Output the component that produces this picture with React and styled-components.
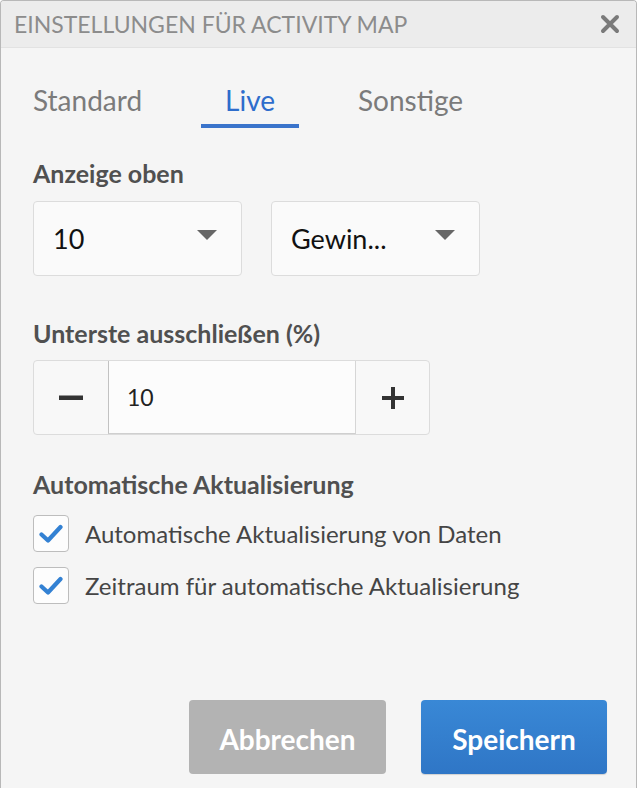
import styled, { createGlobalStyle } from "styled-components";

const GlobalStyle = createGlobalStyle`
  html, body {
    margin: 0;
    padding: 0;
    background: #ffffff;
  }
  body {
    font-family: Lato, "Noto Sans", sans-serif;
  }
`;

const Panel = styled.div`
  box-sizing: border-box;
  width: 637px;
  height: 788px;
  border: 1px solid #b8b8b8;
  border-bottom: none;
  border-radius: 4px 4px 0 0;
  background: #f5f5f5;
  display: flex;
  flex-direction: column;
  overflow: hidden;
`;

const Header = styled.div`
  height: 46px;
  flex-shrink: 0;
  background: #ececec;
  border-bottom: 1px solid #e2e2e2;
  display: flex;
  align-items: center;
  justify-content: space-between;
  padding: 0 14px 0 13px;
`;

const Title = styled.h2`
  margin: 0;
  font-size: 23px;
  font-weight: 400;
  color: #8c8c8c;
  text-transform: uppercase;
`;

const CloseButton = styled.button`
  border: none;
  background: none;
  padding: 0;
  width: 24px;
  height: 24px;
  display: flex;
  align-items: center;
  justify-content: center;
  cursor: pointer;
`;

const Body = styled.div`
  flex: 1;
  display: flex;
  flex-direction: column;
  padding: 0 32px;
`;

const Tabs = styled.div`
  display: flex;
  gap: 35px;
  margin: 37px 0 0 -24px;
`;

const Tab = styled.div`
  height: 43px;
  padding: 0 24px;
  box-sizing: border-box;
  font-size: 28px;
  line-height: 30px;
  color: ${({ $active }) => ($active ? "#2e6dcc" : "#7b7b7b")};
  border-bottom: 4px solid
    ${({ $active }) => ($active ? "#3a74cb" : "transparent")};
`;

const SectionLabel = styled.div`
  font-size: 25px;
  line-height: 30px;
  font-weight: 700;
  color: #505050;
  margin-top: ${({ $top }) => $top}px;
`;

const SelectRow = styled.div`
  display: flex;
  gap: 29px;
  margin-top: 13px;
`;

const Select = styled.div`
  box-sizing: border-box;
  width: 209px;
  height: 75px;
  border: 1px solid #dcdcdc;
  border-radius: 4px;
  background: #fafafa;
  display: flex;
  align-items: center;
  justify-content: space-between;
  padding: 0 24px 0 19px;
  font-size: 27px;
  color: #111;
`;

const Caret = styled.span`
  width: 0;
  height: 0;
  border-left: 10px solid transparent;
  border-right: 10px solid transparent;
  border-top: 10px solid #666;
  margin-bottom: 8px;
`;

const Stepper = styled.div`
  box-sizing: border-box;
  width: 397px;
  height: 75px;
  margin-top: 12px;
  display: flex;
  border: 1px solid #dcdcdc;
  border-radius: 4px;
  background: #f8f8f8;
  overflow: hidden;
`;

const StepButton = styled.button`
  width: ${({ $w }) => $w}px;
  border: none;
  background: transparent;
  display: flex;
  align-items: center;
  justify-content: center;
  padding: 0;
`;

const StepInput = styled.div`
  flex: 1;
  background: #fcfcfc;
  border-left: 1px solid #c2c2c2;
  border-right: 1px solid #d6d6d6;
  border-bottom: 1px solid #cfcfcf;
  display: flex;
  align-items: center;
  padding-left: 18px;
  font-size: 23px;
  color: #222;
`;

const CheckList = styled.div`
  display: flex;
  flex-direction: column;
  gap: 15px;
  margin-top: 16px;
`;

const CheckRow = styled.label`
  display: flex;
  align-items: center;
  gap: 16px;
  font-size: 24px;
  color: #454545;
`;

const Box = styled.span`
  box-sizing: border-box;
  width: 36px;
  height: 37px;
  border: 1px solid #bdbdbd;
  border-radius: 4px;
  background: #fdfdfd;
  display: flex;
  align-items: center;
  justify-content: center;
`;

const Footer = styled.div`
  margin-top: auto;
  display: flex;
  justify-content: flex-end;
  gap: 35px;
  padding: 0 29px 14px 0;
`;

const Button = styled.button`
  height: 74px;
  width: ${({ $w }) => $w}px;
  border: none;
  border-radius: 4px;
  padding: 4px 0 0;
  font-family: Lato, "Noto Sans", sans-serif;
  font-size: 28px;
  font-weight: 700;
  color: #ffffff;
  background: ${({ $variation }) =>
    $variation === "primary"
      ? "linear-gradient(#3988d6, #2f76c6)"
      : "#b3b3b3"};
  box-shadow: ${({ $variation }) =>
    $variation === "primary" ? "0 1px 1px rgba(0,0,0,0.15)" : "none"};
`;

function CheckIcon() {
  return (
    <svg width="24" height="20" viewBox="0 0 24 20">
      <path
        d="M2.5 10.5 L9 16.5 L21.5 3"
        fill="none"
        stroke="#3381d3"
        strokeWidth="4.2"
        strokeLinecap="round"
        strokeLinejoin="round"
      />
    </svg>
  );
}

function Checkbox({ label }) {
  return (
    <CheckRow>
      <Box>
        <CheckIcon />
      </Box>
      {label}
    </CheckRow>
  );
}

export default function App() {
  return (
    <>
      <GlobalStyle />
      <Panel>
        <Header>
          <Title>Einstellungen für Activity Map</Title>
          <CloseButton aria-label="close">
            <svg width="20" height="20" viewBox="0 0 20 20">
              <path
                d="M3 3 L17 17 M17 3 L3 17"
                stroke="#7a7a7a"
                strokeWidth="4"
                strokeLinecap="round"
              />
            </svg>
          </CloseButton>
        </Header>

        <Body>
          <Tabs>
            <Tab>Standard</Tab>
            <Tab $active>Live</Tab>
            <Tab>Sonstige</Tab>
          </Tabs>

          <SectionLabel $top={30}>Anzeige oben</SectionLabel>
          <SelectRow>
            <Select>
              <span>10</span>
              <Caret />
            </Select>
            <Select>
              <span>Gewin...</span>
              <Caret />
            </Select>
          </SelectRow>

          <SectionLabel $top={42}>Unterste ausschließen (%)</SectionLabel>
          <Stepper>
            <StepButton $w={74} aria-label="minus">
              <svg width="24" height="6" viewBox="0 0 24 6">
                <rect x="0" y="0.5" width="24" height="4.5" fill="#333" />
              </svg>
            </StepButton>
            <StepInput>10</StepInput>
            <StepButton $w={73} aria-label="plus">
              <svg width="22" height="22" viewBox="0 0 22 22">
                <rect x="0" y="9" width="22" height="4" fill="#333" />
                <rect x="9" y="0" width="4" height="22" fill="#333" />
              </svg>
            </StepButton>
          </Stepper>

          <SectionLabel $top={34}>Automatische Aktualisierung</SectionLabel>
          <CheckList>
            <Checkbox label="Automatische Aktualisierung von Daten" />
            <Checkbox label="Zeitraum für automatische Aktualisierung" />
          </CheckList>
        </Body>

        <Footer>
          <Button $w={197}>Abbrechen</Button>
          <Button $w={186} $variation="primary">
            Speichern
          </Button>
        </Footer>
      </Panel>
    </>
  );
}
